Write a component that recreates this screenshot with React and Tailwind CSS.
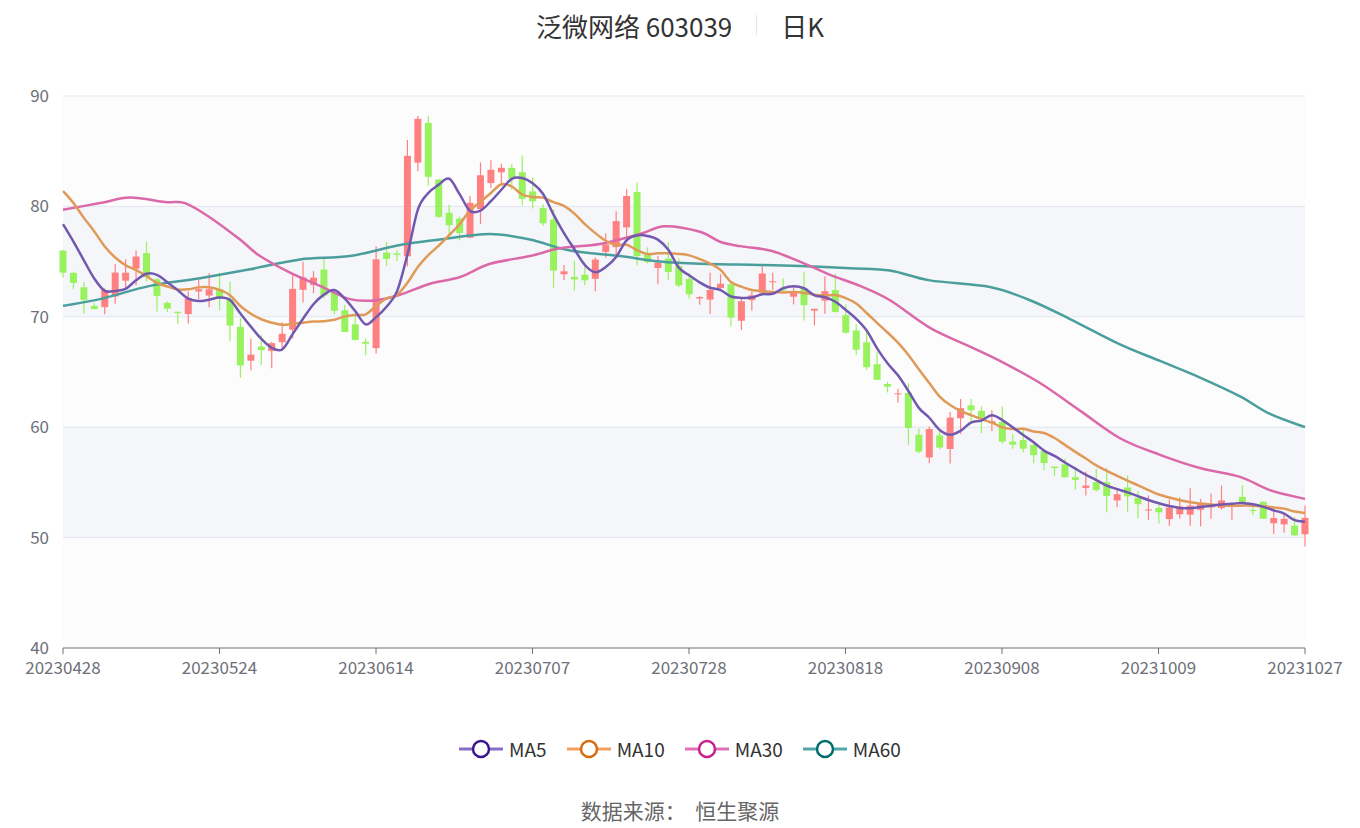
import React from "react";

const X0 = 63, X1 = 1305, N = 120;
const step = (X1 - X0) / (N - 1);
const py = (p) => 96 + (90 - p) * 11.04;
const px = (i) => X0 + i * step;

const anchors = [[0,74],[3,71],[5,74],[7,75],[9,72],[11,70],[13,73],[15,72],[17,66],[19,67],[21,69],[22,72],[24,74],[26,70],[28,68],[29,67.5],[30,75],[32,76],[33,84],[34,88],[35,83],[36,79],[38,78],[39,80],[40,83],[42,84],[43,82],[45,80],[46,78.5],[47,74.5],[49,73.5],[50,73],[51,75],[52,77],[53,79],[54,81],[55,76],[57,75],[60,71.5],[62,72.5],[63,73],[64,70],[66,72],[67,74],[68,73.5],[70,72],[72,71],[73,72],[75,68],[77,65],[78,64],[80,63],[82,58],[83,60],[84,58.5],[85,61],[86,61.5],[88,61],[90,59],[92,58],[94,57],[95,56],[97,55],[100,54],[102,53.5],[105,52.5],[110,53],[113,53.5],[115,52],[117,51.5],[118,50],[119,52]];

function interp(a, i) {
  for (let k = 0; k < a.length - 1; k++) {
    if (i >= a[k][0] && i <= a[k + 1][0]) {
      const t = (i - a[k][0]) / (a[k + 1][0] - a[k][0] || 1);
      return a[k][1] + t * (a[k + 1][1] - a[k][1]);
    }
  }
  return a[a.length - 1][1];
}
let seed = 7;
const rnd = () => { seed = (seed * 9301 + 49297) % 233280; return seed / 233280; };

const closes = [];
for (let i = 0; i < N; i++) closes.push(interp(anchors, i) + (rnd() - 0.5) * 1.2 * (closes.length && i < 90 ? 1 : 0.5));
const candles = closes.map((c, i) => {
  const prev = i ? closes[i - 1] : 76;
  const o = prev + (rnd() - 0.5) * 1.5;
  const hi = Math.max(o, c) + rnd() * 1.6;
  const lo = Math.min(o, c) - rnd() * 1.6;
  return { o, c, hi, lo };
});
const pre = [82, 84, 85, 83, 86, 84, 81, 80, 79, 78];
const all = [...pre, ...closes];
const ma = (n) => closes.map((_, i) => {
  const j = i + pre.length;
  let s = 0, k = 0;
  for (let m = Math.max(0, j - n + 1); m <= j; m++) { s += all[m]; k++; }
  return s / k;
});
const ma5 = ma(5), ma10 = ma(10);

function smoothPath(pts) {
  let d = `M${pts[0][0]},${pts[0][1]}`;
  for (let i = 0; i < pts.length - 1; i++) {
    const p0 = pts[i - 1] || pts[i], p1 = pts[i], p2 = pts[i + 1], p3 = pts[i + 2] || p2;
    const c1 = [p1[0] + (p2[0] - p0[0]) / 6, p1[1] + (p2[1] - p0[1]) / 6];
    const c2 = [p2[0] - (p3[0] - p1[0]) / 6, p2[1] - (p3[1] - p1[1]) / 6];
    d += ` C${c1[0]},${c1[1]} ${c2[0]},${c2[1]} ${p2[0]},${p2[1]}`;
  }
  return d;
}
const ma30a = [[63,79.7],[100,80.3],[130,80.8],[165,80.4],[185,80.3],[210,79],[240,77],[260,75.5],[290,74],[320,72.8],[350,71.6],[376,71.5],[400,72],[430,73],[460,73.6],[490,74.8],[530,75.5],[560,76.2],[600,76.6],[640,77.5],[665,78.2],[700,77.7],[720,76.8],[740,76.4],[770,76],[800,75],[830,73.8],[860,72.8],[890,71.5],[930,69],[970,67.3],[1000,66],[1040,64],[1080,61.5],[1120,59],[1160,57.5],[1200,56.3],[1240,55.5],[1270,54.3],[1305,53.5]];
const ma60a = [[63,71],[100,71.6],[150,72.8],[200,73.5],[250,74.3],[300,75.2],[350,75.5],[400,76.5],[440,77],[490,77.5],[530,77],[570,76],[620,75.5],[660,75],[700,74.8],[760,74.7],[800,74.6],[850,74.4],[890,74.2],[930,73.3],[990,72.7],[1030,71.5],[1070,69.8],[1120,67.5],[1160,66],[1200,64.5],[1240,62.8],[1270,61.2],[1305,60]];

const labels = ["20230428","20230524","20230614","20230707","20230728","20230818","20230908","20231009","20231027"];

export default function App() {
  const font = { fontFamily: "'Noto Sans CJK SC','Open Sans',sans-serif" };
  return (
    <div className="w-[1360px] h-[828px] bg-white relative" style={font}>
      <div className="h-[50px] flex items-center justify-center text-[26px] text-[#333] gap-6">
        <span>泛微网络 603039</span>
        <span className="w-px h-5 bg-[#e5e5e5]" />
        <span>日K</span>
      </div>
      <svg width="1360" height="660" viewBox="0 50 1360 660" className="block">
        <rect x={X0} y={py(80)} width={X1 - X0} height={py(70) - py(80)} fill="#f5f6fa" />
        <rect x={X0} y={py(60)} width={X1 - X0} height={py(50) - py(60)} fill="#f5f6fa" />
        <rect x={X0} y={py(90)} width={X1 - X0} height={py(80) - py(90)} fill="#fcfcfd" />
        <rect x={X0} y={py(70)} width={X1 - X0} height={py(60) - py(70)} fill="#fcfcfd" />
        <rect x={X0} y={py(50)} width={X1 - X0} height={py(40) - py(50)} fill="#fcfcfd" />
        {[90, 80, 70, 60, 50].map((v) => (
          <line key={v} x1={X0} x2={X1} y1={py(v)} y2={py(v)} stroke="#e0e6f1" />
        ))}
        {[90, 80, 70, 60, 50, 40].map((v) => (
          <text key={v} x={49} y={py(v) + 6} textAnchor="end" fontSize="17" fill="#6e7079">{v}</text>
        ))}
        <line x1={X0} x2={X1} y1={648} y2={648} stroke="#6e7079" />
        {labels.map((l, k) => {
          const x = X0 + k * (k === 8 ? (X1 - X0) / 8 : 156.5);
          return (
            <g key={l}>
              <line x1={x} x2={x} y1={648} y2={654} stroke="#6e7079" />
              <text x={x} y={674} textAnchor="middle" fontSize="17" fill="#6e7079">{l}</text>
            </g>
          );
        })}
        {candles.map((c, i) => {
          const up = c.c >= c.o;
          const col = up ? "#ff8080" : "#98f25e";
          const x = px(i);
          const top = py(Math.max(c.o, c.c)), bot = py(Math.min(c.o, c.c));
          return (
            <g key={i}>
              <line x1={x} x2={x} y1={py(c.hi)} y2={py(c.lo)} stroke={col} strokeWidth="1.2" />
              <rect x={x - 3.5} y={top} width="7" height={Math.max(1, bot - top)} fill={col} />
            </g>
          );
        })}
        <path d={smoothPath(ma60a.map(([x, p]) => [x, py(p)]))} fill="none" stroke="#4a9e9c" strokeWidth="2.5" />
        <path d={smoothPath(ma30a.map(([x, p]) => [x, py(p)]))} fill="none" stroke="#db68a8" strokeWidth="2.5" />
        <path d={smoothPath(ma10.map((v, i) => [px(i), py(v)]))} fill="none" stroke="#e09a58" strokeWidth="2.5" />
        <path d={smoothPath(ma5.map((v, i) => [px(i), py(v)]))} fill="none" stroke="#7358b0" strokeWidth="2.5" />
      </svg>
      <div className="absolute left-0 right-0 top-[735px] flex justify-center gap-[20px] text-[19px] text-[#333]">
        {[["MA5", "#8a6cc8", "#3a1690"], ["MA10", "#f0a060", "#d66c10"], ["MA30", "#e070b8", "#c8208a"], ["MA60", "#50a8a8", "#006e6e"]].map(([n, l, c]) => (
          <div key={n} className="flex items-center gap-[6px]">
            <svg width="44" height="22">
              <line x1="0" x2="44" y1="11" y2="11" stroke={l} strokeWidth="3" />
              <circle cx="22" cy="11" r="8" fill="white" stroke={c} strokeWidth="2.5" />
            </svg>
            <span>{n}</span>
          </div>
        ))}
      </div>
      <div className="absolute left-0 right-0 top-[795px] text-center text-[21px] text-[#666]">数据来源：&nbsp;&nbsp;恒生聚源</div>
    </div>
  );
}
